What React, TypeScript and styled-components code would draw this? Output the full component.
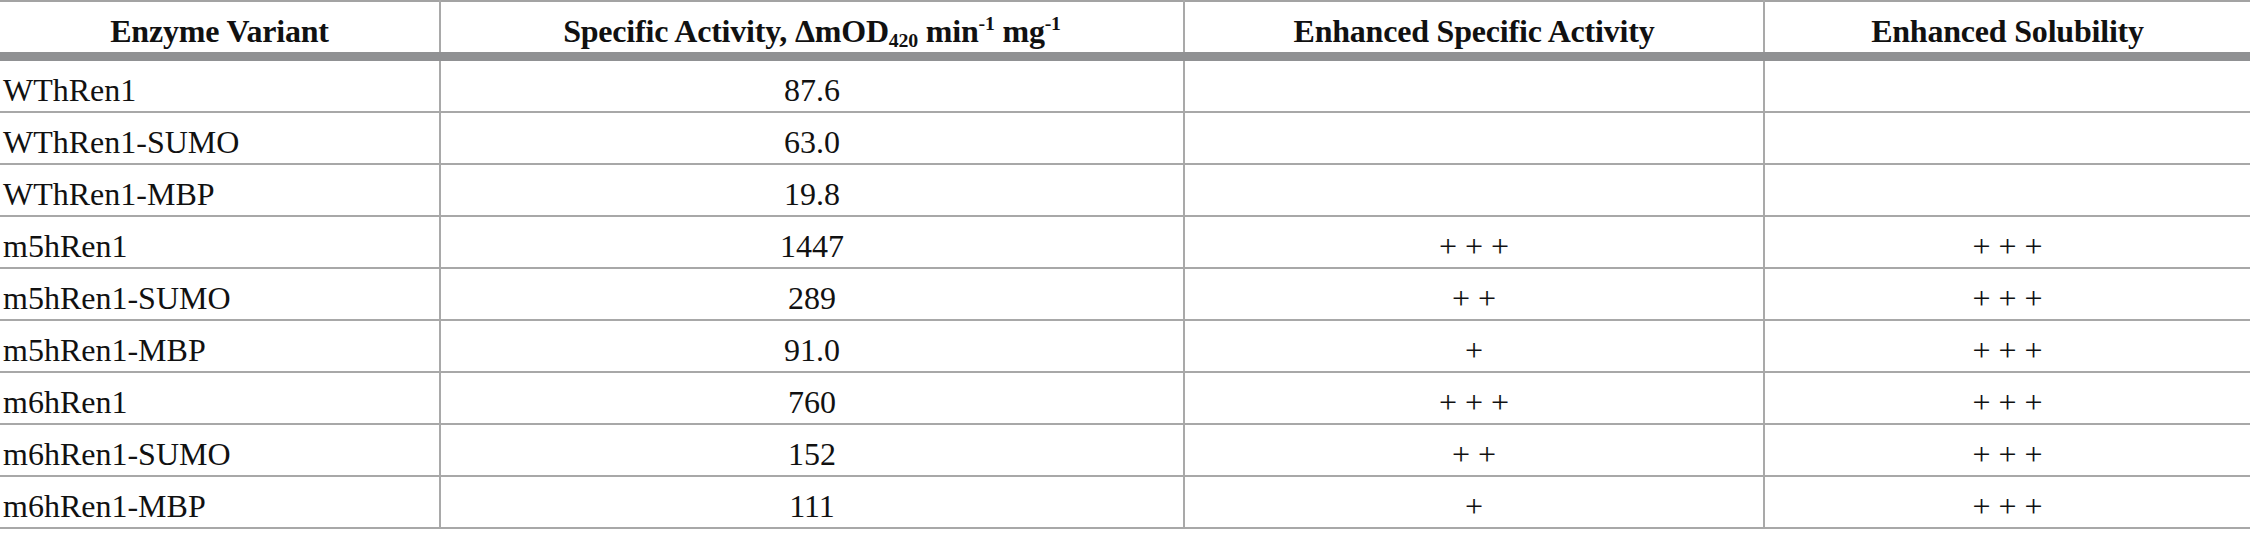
import React from "react";
import styled, { createGlobalStyle } from "styled-components";

const Global = createGlobalStyle`
  html, body { margin: 0; padding: 0; background: #ffffff; }
  body { font-family: "Liberation Serif", "Times New Roman", serif; color: #111; }
`;

const Table = styled.table`
  width: 2250px;
  border-collapse: collapse;
  table-layout: fixed;
  border-top: 2px solid #a3a3a3;
`;

const HeadCell = styled.th`
  height: 43px;
  box-sizing: content-box;
  padding: 7px 0 0 0;
  font-size: 32px;
  line-height: 36px;
  font-weight: 700;
  text-align: center;
  vertical-align: middle;
  border-bottom: 9px solid #909193;
  border-left: 2px solid #a9a9a9;
  letter-spacing: -0.2px;
  &:first-child { border-left: none; }
  sub, sup { font-size: 0.62em; line-height: 0; }
  sub { vertical-align: -0.25em; }
  sup { vertical-align: 0.6em; }
`;

const Cell = styled.td<{ $align?: "left" | "center" }>`
  height: 42px;
  box-sizing: content-box;
  padding: 8px 0 0 ${(p) => (p.$align === "left" ? "3px" : "0")};
  font-size: 32px;
  line-height: 36px;
  text-align: ${(p) => p.$align ?? "center"};
  vertical-align: middle;
  border-bottom: 2px solid #a8a8a8;
  border-left: 2px solid #a9a9a9;
  white-space: pre;
  &:first-child { border-left: none; }
`;

const rows: [string, string, string, string][] = [
  ["WThRen1", "87.6", "", ""],
  ["WThRen1-SUMO", "63.0", "", ""],
  ["WThRen1-MBP", "19.8", "", ""],
  ["m5hRen1", "1447", "+ + +", "+ + +"],
  ["m5hRen1-SUMO", "289", "+ +", "+ + +"],
  ["m5hRen1-MBP", "91.0", "+", "+ + +"],
  ["m6hRen1", "760", "+ + +", "+ + +"],
  ["m6hRen1-SUMO", "152", "+ +", "+ + +"],
  ["m6hRen1-MBP", "111", "+", "+ + +"],
];

export default function App() {
  return (
    <>
      <Global />
      <Table>
        <colgroup>
          <col style={{ width: 440 }} />
          <col style={{ width: 744 }} />
          <col style={{ width: 580 }} />
          <col style={{ width: 486 }} />
        </colgroup>
        <thead>
          <tr>
            <HeadCell>Enzyme Variant</HeadCell>
            <HeadCell>
              Specific Activity, ΔmOD<sub>420</sub> min<sup>-1</sup> mg<sup>-1</sup>
            </HeadCell>
            <HeadCell>Enhanced Specific Activity</HeadCell>
            <HeadCell>Enhanced Solubility</HeadCell>
          </tr>
        </thead>
        <tbody>
          {rows.map((r) => (
            <tr key={r[0]}>
              <Cell $align="left">{r[0]}</Cell>
              <Cell>{r[1]}</Cell>
              <Cell>{r[2]}</Cell>
              <Cell>{r[3]}</Cell>
            </tr>
          ))}
        </tbody>
      </Table>
    </>
  );
}
